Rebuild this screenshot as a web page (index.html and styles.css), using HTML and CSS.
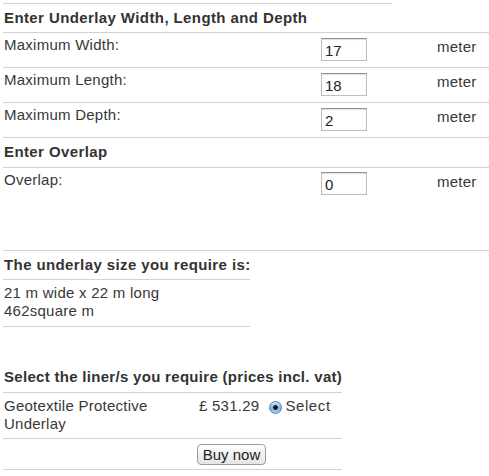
FILE: index.html
```html
<!DOCTYPE html>
<html lang="en">
<head>
    <meta charset="UTF-8">
    <meta name="viewport" content="width=device-width, initial-scale=1.0">
    <title>Underlay Calculator</title>
    <link rel="stylesheet" href="styles.css">
</head>
<body>

    <div class="calculator">
        <div class="top-rule"></div>

        <!-- Afmetingen -->
        <div class="heading">Enter Underlay Width, Length and Depth</div>
        <div class="row">
            <label class="label" for="maxWidth">Maximum Width:</label>
            <input class="num" type="text" id="maxWidth" value="17">
            <span class="unit">meter</span>
        </div>
        <div class="row">
            <label class="label" for="maxLength">Maximum Length:</label>
            <input class="num" type="text" id="maxLength" value="18">
            <span class="unit">meter</span>
        </div>
        <div class="row">
            <label class="label" for="maxDepth">Maximum Depth:</label>
            <input class="num" type="text" id="maxDepth" value="2">
            <span class="unit">meter</span>
        </div>

        <div class="heading overlap-heading">Enter Overlap</div>
        <div class="row overlap-row">
            <label class="label" for="overlap">Overlap:</label>
            <input class="num" type="text" id="overlap" value="0">
            <span class="unit">meter</span>
        </div>

        <!-- Resultaat -->
        <div class="heading result-heading">The underlay size you require is:</div>
        <div class="result">
            21 m wide x 22 m long<br>
            462square m
        </div>

        <!-- Keuze -->
        <div class="liners">
            <div class="heading liner-heading">Select the liner/s you require (prices incl. vat)</div>
            <div class="liner-row">
                <span class="liner-name">Geotextile Protective Underlay</span>
                <span class="liner-price">£ 531.29</span>
                <input class="radio" type="radio" name="liner" id="liner1" checked>
                <label class="radio-label" for="liner1">Select</label>
            </div>
            <div class="buy-row">
                <button class="buy-btn">Buy now</button>
            </div>
        </div>
    </div>

</body>
</html>
```

FILE: styles.css
```css
body {
    font-family: "Liberation Sans", Arial, sans-serif;
    font-size: 15px;
    line-height: 18px;
    letter-spacing: 0.25px;
    color: #383838;
    margin: 0;
    padding: 0;
    background-color: white;
}

.calculator {
    margin-left: 3px;
}

.top-rule {
    width: 389px;
    margin-top: 3px;
    border-top: 1px solid #d2d2d2;
}

.heading {
    font-weight: bold;
    letter-spacing: 0.4px;
    white-space: nowrap;
    color: #333;
    padding: 5px 1px 5px;
    border-bottom: 1px solid #d2d2d2;
}

.row {
    display: flex;
    align-items: flex-start;
    height: 34px;
    border-bottom: 1px solid #d2d2d2;
}

.row .label {
    width: 317px;
    padding: 3px 0 0 1px;
}

.num {
    box-sizing: border-box;
    width: 46px;
    height: 23px;
    margin: 5px 0 0;
    padding: 2px 3px 0;
    font-family: "Liberation Sans", Arial, sans-serif;
    font-size: 15px;
    color: #222;
    border: 1px solid #bdbdbd;
    border-top-color: #8e8e8e;
    box-shadow: inset 0 1px 1px rgba(0, 0, 0, 0.12);
    border-radius: 0;
    outline: none;
}

.unit {
    margin-left: 70px;
    padding-top: 5px;
}

.overlap-heading {
    padding-bottom: 6px;
}

.overlap-row {
    height: 82px;
    border-bottom: none;
}

.overlap-row .num {
    margin-top: 4px;
}

.result-heading {
    border-top: 1px solid #d2d2d2;
    border-bottom: none;
}

.result {
    width: 246px;
    padding: 4px 0 6px 1px;
    border-top: 1px solid #d2d2d2;
    border-bottom: 1px solid #d2d2d2;
}

.liners {
    width: 339px;
    margin-top: 36px;
}

.liner-heading {
    letter-spacing: 0.3px;
    padding-bottom: 6px;
}

.liner-row {
    display: flex;
    align-items: flex-start;
    padding: 4px 0 5px;
    border-bottom: 1px solid #d2d2d2;
}

.liner-name {
    width: 195px;
    padding-left: 1px;
}

.liner-price {
    white-space: nowrap;
}

.radio {
    appearance: none;
    -webkit-appearance: none;
    box-sizing: border-box;
    width: 13px;
    height: 13px;
    margin: 4px 3px 0 10px;
    border: 1px solid #5a80b3;
    border-radius: 50%;
    background: radial-gradient(circle at 50% 50%, #111 0, #111 2px, transparent 2.5px),
                linear-gradient(#cfe2fa, #7fb0ea 55%, #a9cdf5);
}

.radio-label {
    white-space: nowrap;
    letter-spacing: 0.6px;
}

.buy-row {
    padding: 5px 0 4px 194px;
    height: 21px;
    border-bottom: 1px solid #d2d2d2;
}

.buy-btn {
    box-sizing: border-box;
    width: 69px;
    height: 21px;
    padding: 0;
    font-family: "Liberation Sans", Arial, sans-serif;
    font-size: 15px;
    color: #222;
    background: linear-gradient(#ffffff, #f1f1f1 50%, #e4e4e4);
    border: 1px solid #9a9a9a;
    border-radius: 4px;
    cursor: pointer;
}

.buy-btn:hover {
    background: linear-gradient(#ffffff, #e6e6e6);
}
```
